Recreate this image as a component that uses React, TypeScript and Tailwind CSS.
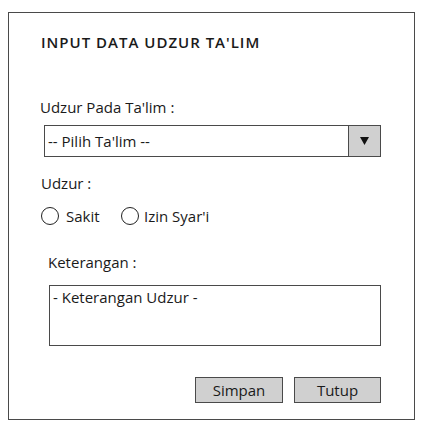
export default function App() {
  return (
    <div
      className="min-h-[428px] bg-white pt-3 pl-2 text-[#1a1a1a]"
      style={{ fontFamily: '"Comic Sans MS", "Open Sans", sans-serif' }}
    >
      <div className="w-[407px] h-[408px] border border-[#4a4a4a] flex flex-col pl-[31px] text-[15px]">
        {/* Title */}
        <h1 className="mt-[19px] ml-[1px] leading-[20px] text-[15px] font-semibold tracking-[1px]">
          INPUT DATA UDZUR TA&apos;LIM
        </h1>

        {/* Udzur pada ta'lim */}
        <label className="mt-[45px] leading-[20px]">Udzur Pada Ta&apos;lim :</label>
        <div className="mt-[8px] ml-[4px] w-[337px] h-[32px] border border-[#4a4a4a] flex">
          <span className="flex-1 flex items-center pl-[3px] leading-[20px]">-- Pilih Ta&apos;lim --</span>
          <div className="w-[32px] border-l border-[#4a4a4a] bg-[#d0d0d0] flex items-center justify-center">
            <svg width="9" height="8" viewBox="0 0 9 8">
              <path d="M0 0 H9 L4.5 8 Z" fill="#111" />
            </svg>
          </div>
        </div>

        {/* Udzur radios */}
        <label className="mt-[16px] ml-[1px] leading-[20px]">Udzur :</label>
        <div className="mt-[13px] ml-[1px] h-[20px] flex items-center">
          <span className="shrink-0 w-[18px] h-[18px] rounded-full border-[1.5px] border-[#222]" />
          <span className="ml-[7px] w-[55px] leading-[20px]">Sakit</span>
          <span className="shrink-0 w-[18px] h-[18px] rounded-full border-[1.5px] border-[#222]" />
          <span className="ml-[5px] leading-[20px]">Izin Syar&apos;i</span>
        </div>

        {/* Keterangan */}
        <label className="mt-[26px] ml-[8px] leading-[20px]">Keterangan :</label>
        <div className="mt-[13px] ml-[9px] w-[332px] h-[61px] border border-[#4a4a4a] pl-[3px] pt-[1px] leading-[20px]">
          - Keterangan Udzur -
        </div>

        {/* Buttons */}
        <div className="mt-[31px] ml-[155px] flex gap-[11px]">
          <button className="w-[88px] h-[26px] border border-[#4a4a4a] bg-[#d0d0d0] leading-[20px]">
            Simpan
          </button>
          <button className="w-[87px] h-[26px] border border-[#4a4a4a] bg-[#d0d0d0] leading-[20px]">
            Tutup
          </button>
        </div>
      </div>
    </div>
  );
}
